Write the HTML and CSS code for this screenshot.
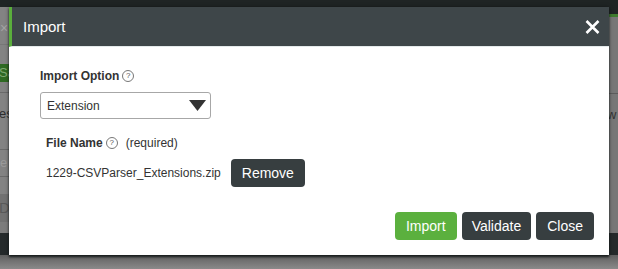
FILE: index.html
```html
<!DOCTYPE html>
<html lang="en">
<head>
  <meta charset="UTF-8">
  <title>Import</title>
  <meta name="viewport" content="width=device-width, initial-scale=1.0">
  <link rel="stylesheet" href="styles.css">
</head>
<body>

<!-- page behind the dialog, dimmed -->
<div class="backdrop">
  <div class="topbar"></div>
  <div class="page-row">
    <div class="side side-left">
      <div class="blk blk-close">&times;</div>
      <div class="blk blk-gap"></div>
      <div class="blk blk-save">Sa</div>
      <div class="blk blk-pad"></div>
      <div class="blk blk-row1">es</div>
      <div class="blk blk-row2">e</div>
      <div class="blk blk-row3"></div>
      <div class="blk blk-del">De</div>
      <div class="blk blk-rest"></div>
    </div>
    <div class="middle"></div>
    <div class="side side-right">
      <div class="blk blk-dark"></div>
      <div class="blk blk-green"></div>
      <div class="blk blk-top"></div>
      <div class="blk blk-w">w</div>
    </div>
  </div>
  <div class="bottom-band"></div>
  <div class="bottom-grey"></div>
</div>

<div class="modal">
  <div class="modal-header">
    <span class="modal-title">Import</span>
    <button class="btn-x" type="button">
      <svg width="15" height="14" viewBox="0 0 15 14"><path d="M1.5 1 L13.5 13 M13.5 1 L1.5 13" stroke="#fff" stroke-width="2.6" fill="none"/></svg>
    </button>
  </div>

  <div class="modal-body">
    <label class="lbl">Import Option <span class="help">?</span></label>
    <div class="select">
      <span>Extension</span>
      <svg width="17" height="11" viewBox="0 0 17 11"><path d="M0 0 H17 L8.5 11 Z" fill="#333"/></svg>
    </div>

    <div class="file-group">
      <label class="lbl">File Name <span class="help">?</span> <span class="req">(required)</span></label>
      <div class="file-row">
        <span class="file-name">1229-CSVParser_Extensions.zip</span>
        <button class="btn btn-dark" type="button">Remove</button>
      </div>
    </div>
  </div>

  <div class="modal-footer">
    <button class="btn btn-green" type="button">Import</button>
    <button class="btn btn-dark" type="button">Validate</button>
    <button class="btn btn-dark" type="button">Close</button>
  </div>
</div>

</body>
</html>
```

FILE: styles.css
```css
* { box-sizing: border-box; }
body {
  margin: 0; width: 618px; height: 269px; overflow: hidden; position: relative;
  font-family: "Liberation Sans", Arial, sans-serif; color: #333; background: #7e7e7e;
}

/* dimmed page */
.backdrop { display: flex; flex-direction: column; height: 269px; }
.topbar { height: 7px; background: #1f2424; }
.page-row { display: flex; height: 226px; }
.side { width: 9px; overflow: hidden; display: flex; flex-direction: column; background: #838383; }
.middle { flex: 1; }
.blk { font-size: 13px; white-space: nowrap; }
.blk-close { height: 38px; color: #a3a3a3; font-size: 14px; padding-top: 14px; line-height: 14px; border-bottom: 1px solid #777; }
.blk-gap { height: 19px; }
.blk-save { height: 18px; background: #2f6a23; color: #7fa872; line-height: 18px; text-indent: -1px; }
.blk-pad { height: 11px; border-bottom: 1px solid #6a6a6a; }
.blk-row1 { height: 57px; padding-top: 14px; line-height: 14px; color: #2e2e2e; text-indent: -1px; border-bottom: 1px solid #6a6a6a; }
.blk-row2 { height: 27px; padding-top: 6px; line-height: 14px; color: #9a9a9a; border-bottom: 1px solid #6a6a6a; }
.blk-row3 { height: 17px; }
.blk-del { height: 28px; background: #727272; color: #5a5a5a; font-size: 15px; line-height: 28px; text-indent: -1px; }
.blk-rest { flex: 1; background: #7c7c7c; }
.side-right { background: #777; }
.blk-dark { height: 7px; background: #1f2424; }
.blk-green { height: 3px; background: #3f7b2e; }
.blk-top { height: 77px; border-bottom: 1px solid #5c5c5c; }
.blk-w { padding-top: 14px; line-height: 14px; color: #333; text-indent: -2px; }
.bottom-band { height: 22px; background: #252a2b; }
.bottom-grey { flex: 1; background: linear-gradient(#5f5f5f, #8a8a8a); }

/* dialog */
.modal {
  position: absolute; left: 9px; top: 7px; width: 600px; height: 248px;
  background: #fff; display: flex; flex-direction: column;
  box-shadow: 0 2px 2px rgba(20,24,24,0.9), 0 0 4px rgba(0,0,0,0.35);
}
.modal-header {
  height: 40px; background: #3e4649; border-left: 3px solid #5aae3c; border-bottom: 1px solid #e4eaeb;
  display: flex; align-items: center; justify-content: space-between; padding: 0 9px 0 11px;
}
.modal-title { color: #fff; font-size: 15px; }
.btn-x { background: none; border: none; padding: 0; display: flex; }

.modal-body { padding: 22px 31px 0; }
.lbl { display: flex; align-items: center; font-size: 12px; font-weight: bold; line-height: 14px; }
.help {
  display: inline-flex; align-items: center; justify-content: center; width: 12px; height: 12px;
  margin-left: 3px; border: 1px solid #777; border-radius: 50%; font-size: 8px; font-weight: normal; color: #555;
}
.req { font-weight: normal; margin-left: 8px; }
.select {
  margin-top: 9px; width: 171px; height: 27px; border: 1px solid #a7a7a7; border-radius: 3px;
  display: flex; align-items: center; justify-content: space-between; padding: 0 4px 0 6px; font-size: 12px;
}
.file-group { padding: 17px 0 0 6px; }
.file-row { display: flex; align-items: center; gap: 10px; margin-top: 9px; font-size: 12px; }

.btn {
  height: 28px; padding: 0 11px; border: none; border-radius: 4px; color: #fff;
  font-family: inherit; font-size: 14px; cursor: pointer;
}
.btn-dark { background: #373e40; }
.btn-green { background: #5bb03e; }
.modal-footer { margin-top: auto; display: flex; justify-content: flex-end; gap: 5px; padding: 0 15px 15px; }
.modal-footer .btn-dark:nth-child(2) { padding: 0 10px; }
```
